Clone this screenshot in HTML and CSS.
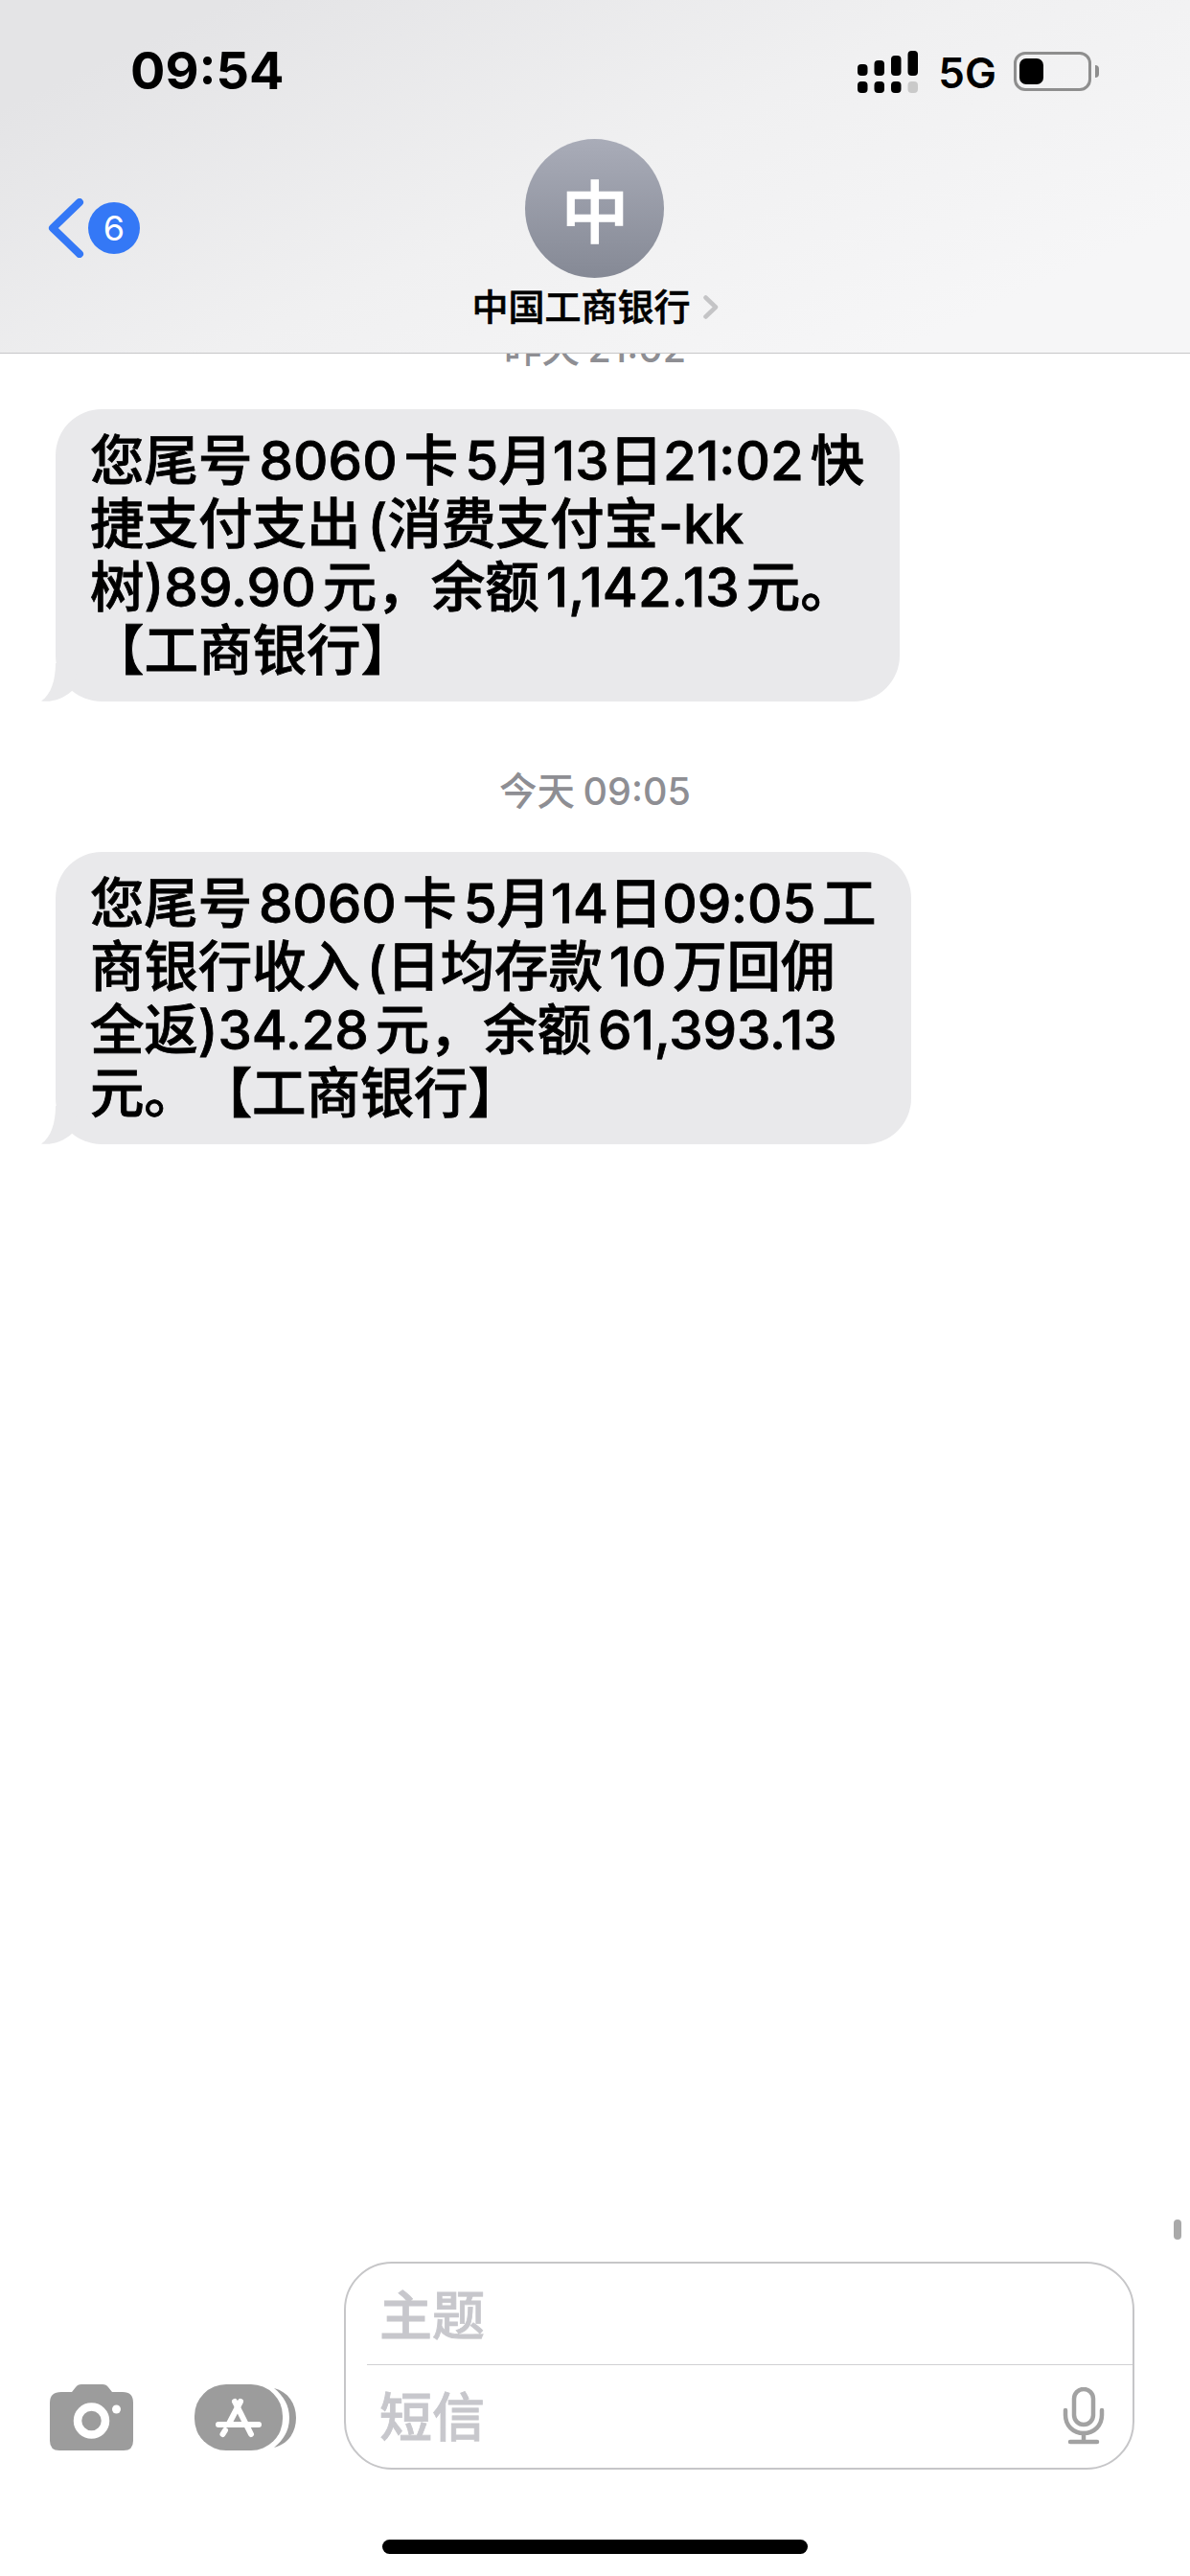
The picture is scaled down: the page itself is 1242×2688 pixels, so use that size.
FILE: index.html
```html
<!DOCTYPE html>
<html lang="zh-CN">
<head>
<meta charset="utf-8">
<title>中国工商银行</title>
<link rel="stylesheet" href="styles.css">
</head>
<body>
<div class="screen">
  <header class="header">
    <div class="status">
      <span class="time">09:54</span>
      <div class="indicators">
        <svg class="signal" width="64" height="44" viewBox="0 0 64 44">
          <rect x="0" y="14" width="10.5" height="12" rx="4"/>
          <rect x="17.5" y="10" width="10.5" height="16" rx="4"/>
          <rect x="35" y="5" width="10.5" height="21" rx="4"/>
          <rect x="52.5" y="0" width="10.5" height="26" rx="4"/>
          <rect x="0" y="32" width="10.5" height="12" rx="4"/>
          <rect x="17.5" y="32" width="10.5" height="12" rx="4"/>
          <rect x="35" y="32" width="10.5" height="12" rx="4"/>
          <rect class="signal-off" x="52.5" y="32" width="10.5" height="12" rx="4"/>
        </svg>
        <span class="network">5G</span>
        <div class="battery"><div class="battery-level"></div></div>
        <div class="battery-nub"></div>
      </div>
    </div>
    <nav class="nav">
      <div class="back">
        <svg class="back-chevron" width="38" height="62" viewBox="0 0 38 62"><polyline points="33,4 5,31 33,58"/></svg>
        <span class="badge">6</span>
      </div>
      <div class="contact">
        <div class="avatar">中</div>
        <div class="contact-name">
          <span>中国工商银行</span>
          <svg class="name-chevron" width="16" height="25" viewBox="0 0 16 25"><polyline points="2.5,2.5 13,12.5 2.5,22.5"/></svg>
        </div>
      </div>
    </nav>
  </header>

  <main class="messages">
    <div class="stamp">昨天 21:02</div>
    <div class="bubble">
      您尾号 8060 卡 5月13日21:02 快<br>捷支付支出 (消费支付宝-kk<br>树)89.90 元，余额 1,142.13 元。<br>【工商银行】
      <svg class="tail" width="40" height="41" viewBox="0 0 40 41"><path d="M15 0C15 18 10 33 0 39.5C12 41 23 37 32 29L40 0Z"/></svg>
    </div>
    <div class="stamp">今天 09:05</div>
    <div class="bubble bubble-tight">
      您尾号 8060 卡 5月14日09:05 工<br>商银行收入 (日均存款 10 万回佣<br>全返)34.28 元，余额 61,393.13<br>元。【工商银行】
      <svg class="tail" width="40" height="41" viewBox="0 0 40 41"><path d="M15 0C15 18 10 33 0 39.5C12 41 23 37 32 29L40 0Z"/></svg>
    </div>
  </main>

  <div class="scroll-thumb"></div>

  <footer class="composer">
    <svg class="camera" width="88" height="70" viewBox="0 0 88 70">
      <path class="icon-fill" d="M12 8H23L27 3Q29 0 33 0H55Q59 0 61 3L65 8H76Q87 8 87 19V59Q87 69 77 69H10Q0 69 0 59V19Q0 8 12 8Z"/>
      <circle class="lens" cx="43.5" cy="38" r="14.5"/>
      <circle class="flash" cx="69.5" cy="26" r="4.5"/>
    </svg>
    <svg class="apps" width="106" height="70" viewBox="0 0 106 70">
      <rect class="icon-fill" x="0" y="0" width="92" height="69" rx="33"/>
      <path class="icon-fill" d="M83 4C98 8 106 20 106 35C106 50 98 62 83 66C93 58 99 48 99 35C99 22 93 12 83 4Z"/>
      <g class="app-glyph">
        <line x1="42" y1="18" x2="59" y2="52"/>
        <line x1="48" y1="18" x2="36" y2="41"/>
        <line x1="32" y1="48" x2="29.5" y2="52"/>
        <line x1="25" y1="42" x2="67" y2="42"/>
      </g>
    </svg>
    <div class="field">
      <div class="field-row field-subject"><span>主题</span></div>
      <div class="field-row">
        <span>短信</span>
        <svg class="mic" width="44" height="60" viewBox="0 0 44 60">
          <rect x="12" y="2" width="20" height="37" rx="10"/>
          <path d="M3 24V29C3 40 11 48 22 48C33 48 41 40 41 29V24"/>
          <line x1="22" y1="48" x2="22" y2="56"/>
          <line x1="8" y1="57" x2="36" y2="57"/>
        </svg>
      </div>
    </div>
  </footer>
  <div class="home-bar"></div>
</div>
</body>
</html>
```
FILE: styles.css
```css
* { box-sizing: border-box; }
html, body { margin: 0; padding: 0; background: #fff; }
body { font-family: Inter, "Noto Sans CJK SC", sans-serif; color: #000; text-spacing-trim: space-all; }

.screen {
  position: relative;
  width: 1242px;
  height: 2688px;
  display: flex;
  flex-direction: column;
  overflow: hidden;
  background: #fff;
}

.header {
  position: relative;
  z-index: 2;
  height: 369px;
  border-bottom: 1.5px solid #c6c6c8;
  background: linear-gradient(155deg, #e4e4e6 12%, #f0f0f1 50%, #f6f6f7 85%);
  flex: none;
}

.status {
  height: 145px;
  display: flex;
  justify-content: space-between;
  align-items: flex-start;
  padding: 44px 95px 0 136px;
}
.time { font-size: 54px; line-height: 60px; font-weight: 700; }
.indicators { display: flex; align-items: center; margin-top: 7px; }
.signal { fill: #000; }
.signal-off { fill: #c9c9c9; }
.network { font-size: 44px; line-height: 44px; font-weight: 600; margin: 3px 18px 0 20px; }
.battery {
  width: 81px;
  height: 41px;
  border: 3px solid #8e8e8e;
  border-radius: 12px;
  padding: 4px 3px;
}
.battery-level { width: 25px; height: 100%; background: #000; border-radius: 7px; }
.battery-nub { width: 4px; height: 13px; margin-left: 4px; background: #8e8e8e; border-radius: 0 4px 4px 0; }

.nav { display: grid; grid-template-columns: 1fr auto 1fr; }
.back { display: flex; align-items: center; gap: 4px; padding: 62px 0 0 50px; align-self: start; }
.back-chevron { fill: none; stroke: #3478f6; stroke-width: 8; stroke-linecap: round; stroke-linejoin: round; }
.badge {
  width: 54px;
  height: 54px;
  border-radius: 50%;
  background: #3478f6;
  color: #fff;
  font-size: 36px;
  display: flex;
  align-items: center;
  justify-content: center;
}
.contact { display: flex; flex-direction: column; align-items: center; }
.avatar {
  width: 145px;
  height: 145px;
  border-radius: 50%;
  background: linear-gradient(180deg, #a9acb8, #858995);
  color: #fff;
  font-size: 70px;
  font-weight: 500;
  -webkit-text-stroke: 1.5px #fff;
  display: flex;
  align-items: center;
  justify-content: center;
}
.contact-name {
  display: flex;
  align-items: center;
  gap: 13px;
  margin-top: 5px;
  font-size: 38px;
  line-height: 50px;
  font-weight: 500;
  -webkit-text-stroke: 0.6px #000;
}
.name-chevron { fill: none; stroke: #c4c4c6; stroke-width: 4.5; stroke-linecap: round; stroke-linejoin: round; }

.messages {
  display: flex;
  flex-direction: column;
  align-items: flex-start;
  margin-top: -28px;
  padding-left: 58px;
}
.stamp {
  width: 1126px;
  text-align: center;
  font-size: 39.5px;
  line-height: 46px;
  font-weight: 500;
  color: #8e8e93;
  margin-bottom: 40px;
  word-spacing: -2px;
}
.bubble {
  position: relative;
  background: #e9e9eb;
  border-radius: 48px;
  padding: 21px 37px 20px 36px;
  font-size: 56.5px;
  line-height: 66px;
  font-weight: 500;
  -webkit-text-stroke: 0.8px #000;
  word-spacing: -8px;
  margin-bottom: 71px;
  white-space: nowrap;
}
.bubble:last-child { margin-bottom: 0; }
.bubble-tight { letter-spacing: -0.15px; }
.tail { position: absolute; left: -15px; bottom: -1px; fill: #e9e9eb; }

.scroll-thumb {
  position: absolute;
  left: 1225px;
  top: 2316px;
  width: 8px;
  height: 21px;
  border-radius: 4px;
  background: #a9a9a9;
}

.composer {
  margin-top: auto;
  display: flex;
  align-items: flex-end;
  padding-left: 52px;
}
.icon-fill { fill: #9c9c9c; }
.camera { flex: none; margin: 0 63px 19px 0; }
.lens { fill: none; stroke: #fff; stroke-width: 8.5; }
.flash { fill: #fff; }
.apps { flex: none; margin: 0 50px 19px 0; }
.app-glyph { stroke: #fff; stroke-width: 6; stroke-linecap: round; }

.field {
  width: 825px;
  height: 217px;
  border: 2.5px solid #c6c6c8;
  border-radius: 50px;
  display: flex;
  flex-direction: column;
}
.field-row {
  height: 106px;
  display: flex;
  align-items: center;
  justify-content: space-between;
  padding: 0 29px 0 35px;
  font-size: 55px;
  font-weight: 500;
  -webkit-text-stroke: 0.8px #c7c7cc;
  color: #c7c7cc;
}
.field-row span { margin-bottom: 6px; }
.field-subject {
  margin-left: 22px;
  padding-left: 13px;
  border-bottom: 1.5px solid #d1d1d3;
}
.mic { fill: none; stroke: #a2a2a2; stroke-width: 4.5; stroke-linecap: round; }

.home-bar {
  width: 444px;
  height: 15px;
  margin: 73px 0 23px 399px;
  border-radius: 8px;
  background: #000;
  flex: none;
}
```
